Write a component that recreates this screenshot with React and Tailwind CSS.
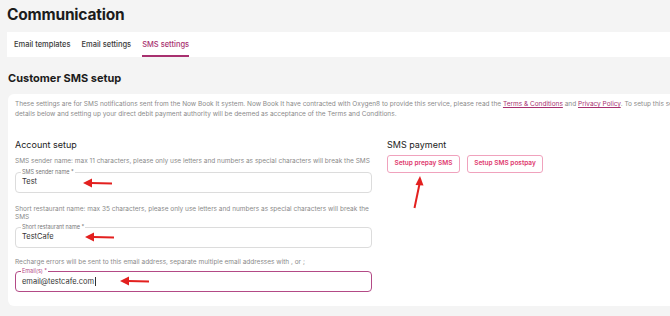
import React from "react";

function Field({ label, value, active, cursor }) {
  return (
    <div
      className={
        "relative h-[21px] rounded-[4px] bg-white " +
        (active ? "border-[1.5px] border-[#b34a86]" : "border border-[#dcdcdc]")
      }
    >
      <span
        className={
          "absolute left-[5px] top-[-4px] bg-white px-[1px] text-[5.5px] leading-[7px] " +
          (active ? "text-[#b34a86]" : "text-[#777]")
        }
      >
        {label}
      </span>
      <div className="flex h-full items-center pl-[6px] text-[7.5px] text-[#333]">
        {value}
        {cursor && <span className="ml-[0.5px] inline-block h-[9px] w-[1px] bg-[#333]" />}
      </div>
    </div>
  );
}

function ArrowLeft({ x, y }) {
  return (
    <svg className="absolute" style={{ left: x, top: y }} width="30" height="10" viewBox="0 0 30 10">
      <polygon points="0,5 9,0.5 9,9.5" fill="#e3201f" />
      <line x1="8" y1="5" x2="29" y2="5.6" stroke="#e3201f" strokeWidth="2" />
    </svg>
  );
}

export default function App() {
  return (
    <div
      className="relative h-[316px] w-[670px] overflow-hidden bg-[#f4f4f4]"
      style={{ fontFamily: "Inter, 'Liberation Sans', sans-serif" }}
    >
      <div className="w-[760px]">
        <h1 className="ml-[7px] pt-[5px] text-[15.5px] font-bold leading-[20px] tracking-[-0.2px] text-[#1c1c1c]">
          Communication
        </h1>
        <div className="ml-[7px] mt-[7px] flex h-[25px] items-stretch gap-[11px] bg-white pl-[7px] text-[7.5px] font-medium">
          <div className="flex items-center text-[#3a3a3a]">Email templates</div>
          <div className="flex items-center text-[#3a3a3a]">Email settings</div>
          <div className="relative flex items-center text-[#a8306f]">
            SMS settings
            <span className="absolute bottom-0 left-0 right-0 h-[2px] bg-[#a8306f]" />
          </div>
        </div>
        <h2 className="ml-[8px] mt-[14px] text-[11px] font-bold leading-[14px] text-[#1c1c1c]">
          Customer SMS setup
        </h2>
        <div className="ml-[8px] mt-[9px] h-[212px] rounded-[6px] bg-white pl-[7px] pt-[6px]">
          <p className="text-[6.5px] leading-[9.5px] text-[#8a8a8a]">
            These settings are for SMS notifications sent from the Now Book It system. Now Book It have contracted with Oxygen8 to provide this service, please read the{" "}
            <span className="text-[#a8306f] underline">Terms &amp; Conditions</span> and{" "}
            <span className="text-[#a8306f] underline">Privacy Policy</span>. To setup this service please fill in the
            <br />
            details below and setting up your direct debit payment authority will be deemed as acceptance of the Terms and Conditions.
          </p>
          <div className="mt-[19px] flex gap-[15px]">
            <div className="w-[357px]">
              <h3 className="text-[9px] leading-[13px] text-[#222]">Account setup</h3>
              <p className="mt-[6px] text-[6.5px] leading-[9.5px] text-[#8a8a8a]">
                SMS sender name: max 11 characters, please only use letters and numbers as special characters will break the SMS
              </p>
              <div className="mt-[5px]">
                <Field label="SMS sender name *" value="Test" />
              </div>
              <p className="mt-[12px] text-[6.5px] leading-[8.5px] text-[#8a8a8a]">
                Short restaurant name: max 35 characters, please only use letters and numbers as special characters will break the SMS
              </p>
              <div className="mt-[5px]">
                <Field label="Short restaurant name *" value="TestCafe" />
              </div>
              <p className="mt-[10px] text-[6.5px] leading-[9.5px] text-[#8a8a8a]">
                Recharge errors will be sent to this email address, separate multiple email addresses with , or ;
              </p>
              <div className="mt-[4px]">
                <Field label="Email(s) *" value="email@testcafe.com" active cursor />
              </div>
            </div>
            <div>
              <h3 className="text-[9px] leading-[13px] text-[#222]">SMS payment</h3>
              <div className="mt-[4px] flex gap-[7px]">
                <button className="flex h-[18px] w-[73px] items-center justify-center rounded-[3px] border border-[#f0a2bd] bg-white text-[6.5px] font-semibold text-[#e0396e]">
                  Setup prepay SMS
                </button>
                <button className="flex h-[18px] w-[76px] items-center justify-center rounded-[3px] border border-[#f0a2bd] bg-white text-[6.5px] font-semibold text-[#e0396e]">
                  Setup SMS postpay
                </button>
              </div>
            </div>
          </div>
        </div>
      </div>

      <ArrowLeft x={83} y={178} />
      <ArrowLeft x={85} y={232} />
      <ArrowLeft x={120} y={276} />
      <svg className="absolute" style={{ left: 410, top: 175 }} width="14" height="34" viewBox="0 0 14 34">
        <polygon points="10,1 5.5,10 13.5,10.5" fill="#e3201f" />
        <line x1="9.5" y1="9" x2="4.5" y2="33" stroke="#e3201f" strokeWidth="2" />
      </svg>
    </div>
  );
}
